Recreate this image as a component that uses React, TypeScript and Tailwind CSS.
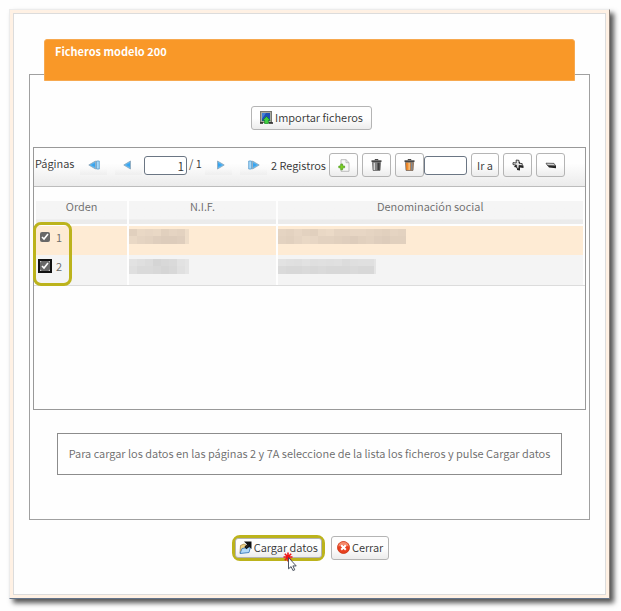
import React, { useState } from 'react';

const buttonClass =
  'flex items-center justify-center rounded-[3px] border border-[#b4b4b4] bg-linear-to-b from-[#fefefe] from-50% to-[#ececec] text-[#333333]';

const flatButtonClass =
  'flex h-5 w-[27px] shrink-0 items-center justify-center bg-linear-to-b from-transparent from-70% to-[#efefef]';

const inputClass = 'h-[19px] rounded-[3px] border border-[#6b7684] bg-white px-[2px] text-right text-[12px]';

// --- Iconos ---

const IconoImportar: React.FC = () => (
  <svg width="13" height="13" viewBox="0 0 13 13" aria-hidden="true">
    <rect x="0.5" y="0.5" width="11" height="11" fill="#a9aaa0" stroke="#77776f" />
    <rect x="2" y="2" width="8" height="8" fill="#1d4fb4" />
    <path d="M2 2h4L2 8z" fill="#3f7fd8" />
    <path d="M0 12h3M9 12h4" stroke="#222222" strokeWidth="1.5" />
    <path d="M6.5 5.5L10.2 9.3H8.4V12.7H4.6V9.3H2.8z" fill="#3fd03f" stroke="#0f7a1c" strokeWidth="0.6" />
  </svg>
);

const IconoCargar: React.FC = () => (
  <svg width="13" height="13" viewBox="0 0 13 13" aria-hidden="true">
    <path d="M1.5 4.5L5 3l2 1v7L1 12z" fill="#f2d489" stroke="#a98b45" strokeWidth="0.8" />
    <path d="M3 7.5L11.5 6 10 11.5 1 12.5z" fill="#b3daf8" stroke="#3d7cbd" strokeWidth="0.9" />
    <path d="M5 0.5h7.5V8L10.3 5.8 7.5 8.3 5.3 6 8 3.4z" fill="#111111" />
    <path d="M6.8 6.5L9.5 4" stroke="#555555" strokeWidth="0.6" />
  </svg>
);

const IconoCerrar: React.FC = () => (
  <svg width="13" height="13" viewBox="0 0 13 13" aria-hidden="true">
    <circle cx="6.5" cy="6.5" r="6" fill="#e8401f" stroke="#c9300f" strokeWidth="0.8" />
    <path d="M1.2 5.4a5.4 5.4 0 0 1 10.6 0Q6.5 3.4 1.2 5.4z" fill="#f58a6c" />
    <path d="M4.2 4.2l4.6 4.6M8.8 4.2L4.2 8.8" stroke="#ffffff" strokeWidth="2" />
  </svg>
);

const IconoTriangulo: React.FC<{ derecha?: boolean; extremo?: boolean }> = ({ derecha, extremo }) => (
  <svg width="12" height="10" viewBox="0 0 12 10" aria-hidden="true" className={derecha ? 'rotate-180' : ''}>
    <path d="M0.8 5L7.5 1v8z" fill="#5bb8f5" stroke="#8ba5b8" strokeWidth="0.8" />
    <path d="M3 5L7 3v4z" fill="#37a3ee" />
    {extremo && <path d="M8.5 1h2.8v8H8.5z" fill="#a5dafc" stroke="#5b9ccb" strokeWidth="0.8" />}
  </svg>
);

const IconoNuevo: React.FC = () => (
  <svg width="12" height="13" viewBox="0 0 12 13" aria-hidden="true">
    <path d="M3 0.7h5L11 3.6v8.7H3z" fill="#f7f7f7" stroke="#b6b6b6" strokeWidth="0.9" />
    <path d="M8 0.7v3h3" fill="none" stroke="#b6b6b6" strokeWidth="0.9" />
    <path d="M2.8 5h1.8v2h2v1.8h-2v2H2.8v-2h-2V7h2z" fill="#7ed321" stroke="#4d9a1c" strokeWidth="0.7" />
  </svg>
);

const IconoPapelera: React.FC<{ color?: boolean }> = ({ color }) => (
  <svg width="11" height="12" viewBox="0 0 11 12" aria-hidden="true">
    <path d="M4 1.2V0.6h3v0.6" fill="none" stroke="#3a3a3a" />
    <path d="M0.5 2.2h10" stroke="#444444" strokeWidth="1.8" />
    <path d="M1.5 3.4h8L9 11.4H2z" fill={color ? '#e9791c' : '#777777'} stroke="#5a5a5a" strokeWidth="0.7" />
    <path d="M3.3 3.8v7.2" stroke={color ? '#f08c2c' : '#d4d4d4'} strokeWidth="1.4" />
    <path d="M5.1 3.8v7.2" stroke={color ? '#ffd99a' : '#8d8d8d'} strokeWidth="1.2" />
    <path d="M7.6 3.8v7.2" stroke={color ? '#7b8b99' : '#3c3c3c'} strokeWidth="2" />
  </svg>
);

const IconoMas: React.FC = () => (
  <svg width="12" height="12" viewBox="0 0 12 12" aria-hidden="true">
    <path d="M5.5 2.5L8 3v3l3.5 0.5V9L8 8.5v3l-3-0.5V8.5L2 8z" fill="#222222" />
    <path d="M4.2 1L7 1.4v2.8l3.2 0.4v2.2L7 6.4v3L4.6 9V6.2L1 5.6V3.6l3.2 0.4z" fill="#e4e4e4" stroke="#333333" strokeWidth="0.9" />
  </svg>
);

const IconoMenos: React.FC = () => (
  <svg width="12" height="7" viewBox="0 0 12 7" aria-hidden="true">
    <path d="M2 3L11 3.4V6.3L4 5.6z" fill="#222222" />
    <path d="M1 1.2L9 1.4 10.5 3.8 2.5 3.5z" fill="#cfcfcf" stroke="#444444" strokeWidth="0.8" />
  </svg>
);

const Cursor: React.FC = () => (
  <svg
    width="18"
    height="20"
    viewBox="0 0 18 20"
    aria-hidden="true"
    className="pointer-events-none absolute top-[14px] left-12"
  >
    <path d="M5 0.5v9M0.5 5h9M1.8 1.8l6.4 6.4M8.2 1.8L1.8 8.2" stroke="#ee1515" strokeWidth="1.6" />
    <path d="M6.5 7.5v9.5l2.3-2 1.9 4 1.7-0.8-1.9-3.8h3.2z" fill="#999999" opacity="0.4" />
    <path d="M5.5 5.5v11.3l2.6-2.2 1.8 3.9 1.8-0.8-1.8-3.8h3.3z" fill="#ffffff" stroke="#3c4454" strokeWidth="0.9" />
  </svg>
);

// Datos ocultos: bloques de 8x8 con distinta opacidad
const DatoOculto: React.FC<{ tonos: string; color: string; ancho: number }> = ({ tonos, color, ancho }) => (
  <svg width={ancho} height="15" viewBox={`0 0 ${ancho} 15`} role="img" aria-label="Dato oculto">
    <rect width={ancho} height="15" fill={color} opacity="0.4" />
    {tonos.split('').map((tono, i) => (
      <rect
        key={i}
        x={Math.floor(i / 2) * 8}
        y={(i % 2) * 7}
        width="8"
        height={i % 2 ? 8 : 7}
        fill={color}
        opacity={Number(tono) / 10}
      />
    ))}
  </svg>
);

const ficheros = [
  {
    orden: 1,
    fila: 'bg-[#feebd4]',
    color: '#d8c8b8',
    nif: { ancho: 60, tonos: '62243527684857' },
    nombre: { ancho: 128, tonos: '45563452632515464738364557684656' },
  },
  {
    orden: 2,
    fila: 'bg-[#f4f4f4]',
    color: '#cfcfcf',
    nif: { ancho: 60, tonos: '13354576675612' },
    nombre: { ancho: 98, tonos: '152636153625362646352626' },
  },
];

export default function App() {
  const [pagina, setPagina] = useState('1');
  const [irA, setIrA] = useState('');
  const [seleccion, setSeleccion] = useState<number[]>([1, 2]);

  const alternar = (orden: number) => {
    setSeleccion(s => (s.includes(orden) ? s.filter(o => o !== orden) : [...s, orden]));
  };

  return (
    <div className="bg-[#fefefe] pt-[9px] pr-[11px] pb-3 pl-[9px] font-['Noto_Sans_CJK_SC','Noto_Sans',sans-serif] text-[11px] leading-4 font-[350] text-[#333333]">
      <main className="border border-t-[#ececec] border-r-[#8a8078] border-b-[#64748b] border-l-[#ececec] bg-[#fff1e4] p-[3px] shadow-[4px_4px_5px_#555555]">
        <div className="border border-[#dcdcdc] bg-[#fefefe] px-[15px] pt-[60px] pb-[33px]">
          <section className="border border-[#a0a0a0] px-[3px] pb-[44px]">
            {/* Cabecera */}
            <h1 className="-mt-9 mr-[11px] ml-[11px] h-[42px] rounded-t-[3px] border border-[#f7a94f] bg-[#f99828] px-[10px] pt-[3px] font-bold text-white">
              Ficheros modelo 200
            </h1>

            <div className="flex justify-center pt-[25px] pb-[17px] pl-1">
              <button className={`${buttonClass} h-6 gap-[2px] px-2 pb-[2px]`}>
                <IconoImportar />
                Importar ficheros
              </button>
            </div>

            <div className="h-[263px] border border-[#999999]">
              {/* Barra de paginación */}
              <div className="flex h-[39px] items-center border-b border-[#bcbcbc] bg-linear-to-b from-[#fefefe] from-40% to-[#ebebeb] pb-1 pl-px">
                <label htmlFor="pagina" className="w-[45px] shrink-0 pb-1">Páginas</label>
                <button className={flatButtonClass} aria-label="Primera página">
                  <IconoTriangulo extremo />
                </button>
                <button className={`${flatButtonClass} ml-2`} aria-label="Página anterior">
                  <IconoTriangulo />
                </button>
                <input
                  id="pagina"
                  className={`${inputClass} ml-[2px] w-[43px] shrink-0`}
                  value={pagina}
                  onChange={e => setPagina(e.target.value)}
                />
                <span className="ml-[2px] w-4 shrink-0 pb-1 whitespace-nowrap">/ 1</span>
                <button className={flatButtonClass} aria-label="Página siguiente">
                  <IconoTriangulo derecha />
                </button>
                <button className={`${flatButtonClass} ml-2`} aria-label="Última página">
                  <IconoTriangulo derecha extremo />
                </button>
                <span className="ml-1 w-[58px] shrink-0 whitespace-nowrap">2 Registros</span>
                <div className="flex gap-1">
                  <button className={`${buttonClass} h-6 w-[29px] shrink-0`} aria-label="Nuevo registro">
                    <IconoNuevo />
                  </button>
                  <button className={`${buttonClass} h-6 w-[29px] shrink-0`} aria-label="Eliminar registro">
                    <IconoPapelera />
                  </button>
                  <button className={`${buttonClass} h-6 w-[29px] shrink-0`} aria-label="Eliminar todos">
                    <IconoPapelera color />
                  </button>
                </div>
                <input
                  className={`${inputClass} w-[43px] shrink-0`}
                  aria-label="Número de registro"
                  value={irA}
                  onChange={e => setIrA(e.target.value)}
                />
                <div className="ml-1 flex gap-1">
                  <button className={`${buttonClass} h-6 w-[28px] shrink-0 whitespace-nowrap`}>Ir a</button>
                  <button className={`${buttonClass} h-6 w-[29px] shrink-0`} aria-label="Ampliar">
                    <IconoMas />
                  </button>
                  <button className={`${buttonClass} h-6 w-[29px] shrink-0`} aria-label="Reducir">
                    <IconoMenos />
                  </button>
                </div>
              </div>

              {/* Tabla de ficheros */}
              <div className="relative border-b border-[#dcdcdc] pt-3">
                <table className="w-full table-fixed border-collapse text-[#6a6a6a]">
                  <colgroup>
                    <col className="w-[17%]" />
                    <col className="w-[27%]" />
                    <col />
                  </colgroup>
                  <thead>
                    <tr className="h-[25px] bg-linear-to-b from-[#f5f5f5] from-75% to-[#ebebeb] to-80% align-top leading-[10px]">
                      <th className="border-2 border-[#fefefe] p-0 font-[350]">Orden</th>
                      <th className="border-2 border-[#fefefe] p-0 font-[350]">N.I.F.</th>
                      <th className="border-2 border-[#fefefe] p-0 font-[350]">Denominación social</th>
                    </tr>
                  </thead>
                  <tbody>
                    {ficheros.map(f => (
                      <tr key={f.orden} className={`h-[30px] ${f.fila}`}>
                        <td className="border-x-2 border-[#fefefe] p-0 pb-2 pl-1">
                          <label className="flex items-center gap-[6px]">
                            <input
                              type="checkbox"
                              checked={seleccion.includes(f.orden)}
                              onChange={() => alternar(f.orden)}
                              className={`size-[10px] accent-[#686868] ${f.orden === 2 ? 'outline-2 outline-[#111111]' : ''}`}
                            />
                            {f.orden}
                          </label>
                        </td>
                        <td className="border-x-2 border-[#fefefe] p-0 pb-2">
                          <DatoOculto color={f.color} {...f.nif} />
                        </td>
                        <td className="border-x-2 border-[#fefefe] p-0 pb-2">
                          <DatoOculto color={f.color} {...f.nombre} />
                        </td>
                      </tr>
                    ))}
                  </tbody>
                </table>
                <div className="pointer-events-none absolute -bottom-px -left-px h-[64px] w-[39px] rounded-[8px] border-3 border-[#bcb31c]" />
              </div>
            </div>

            <p className="mx-6 mt-[23px] border border-[#8c8c8c] px-1 pt-[11px] pb-[13px] text-center text-[#6a6a6a]">
              Para cargar los datos en las páginas 2 y 7A seleccione de la lista los ficheros y pulse Cargar datos
            </p>
          </section>

          {/* Acciones */}
          <div className="flex items-center justify-center gap-[6px] pt-[15px] pl-[2px]">
            <div className="relative rounded-[8px] border-3 border-[#bcb31c]">
              <button className={`${buttonClass} h-5 gap-[2px] px-[3px] pb-[2px]`}>
                <IconoCargar />
                Cargar datos
              </button>
              <Cursor />
            </div>
            <button className={`${buttonClass} h-6 gap-[2px] px-[5px] pb-[2px]`}>
              <IconoCerrar />
              Cerrar
            </button>
          </div>
        </div>
      </main>
    </div>
  );
}
